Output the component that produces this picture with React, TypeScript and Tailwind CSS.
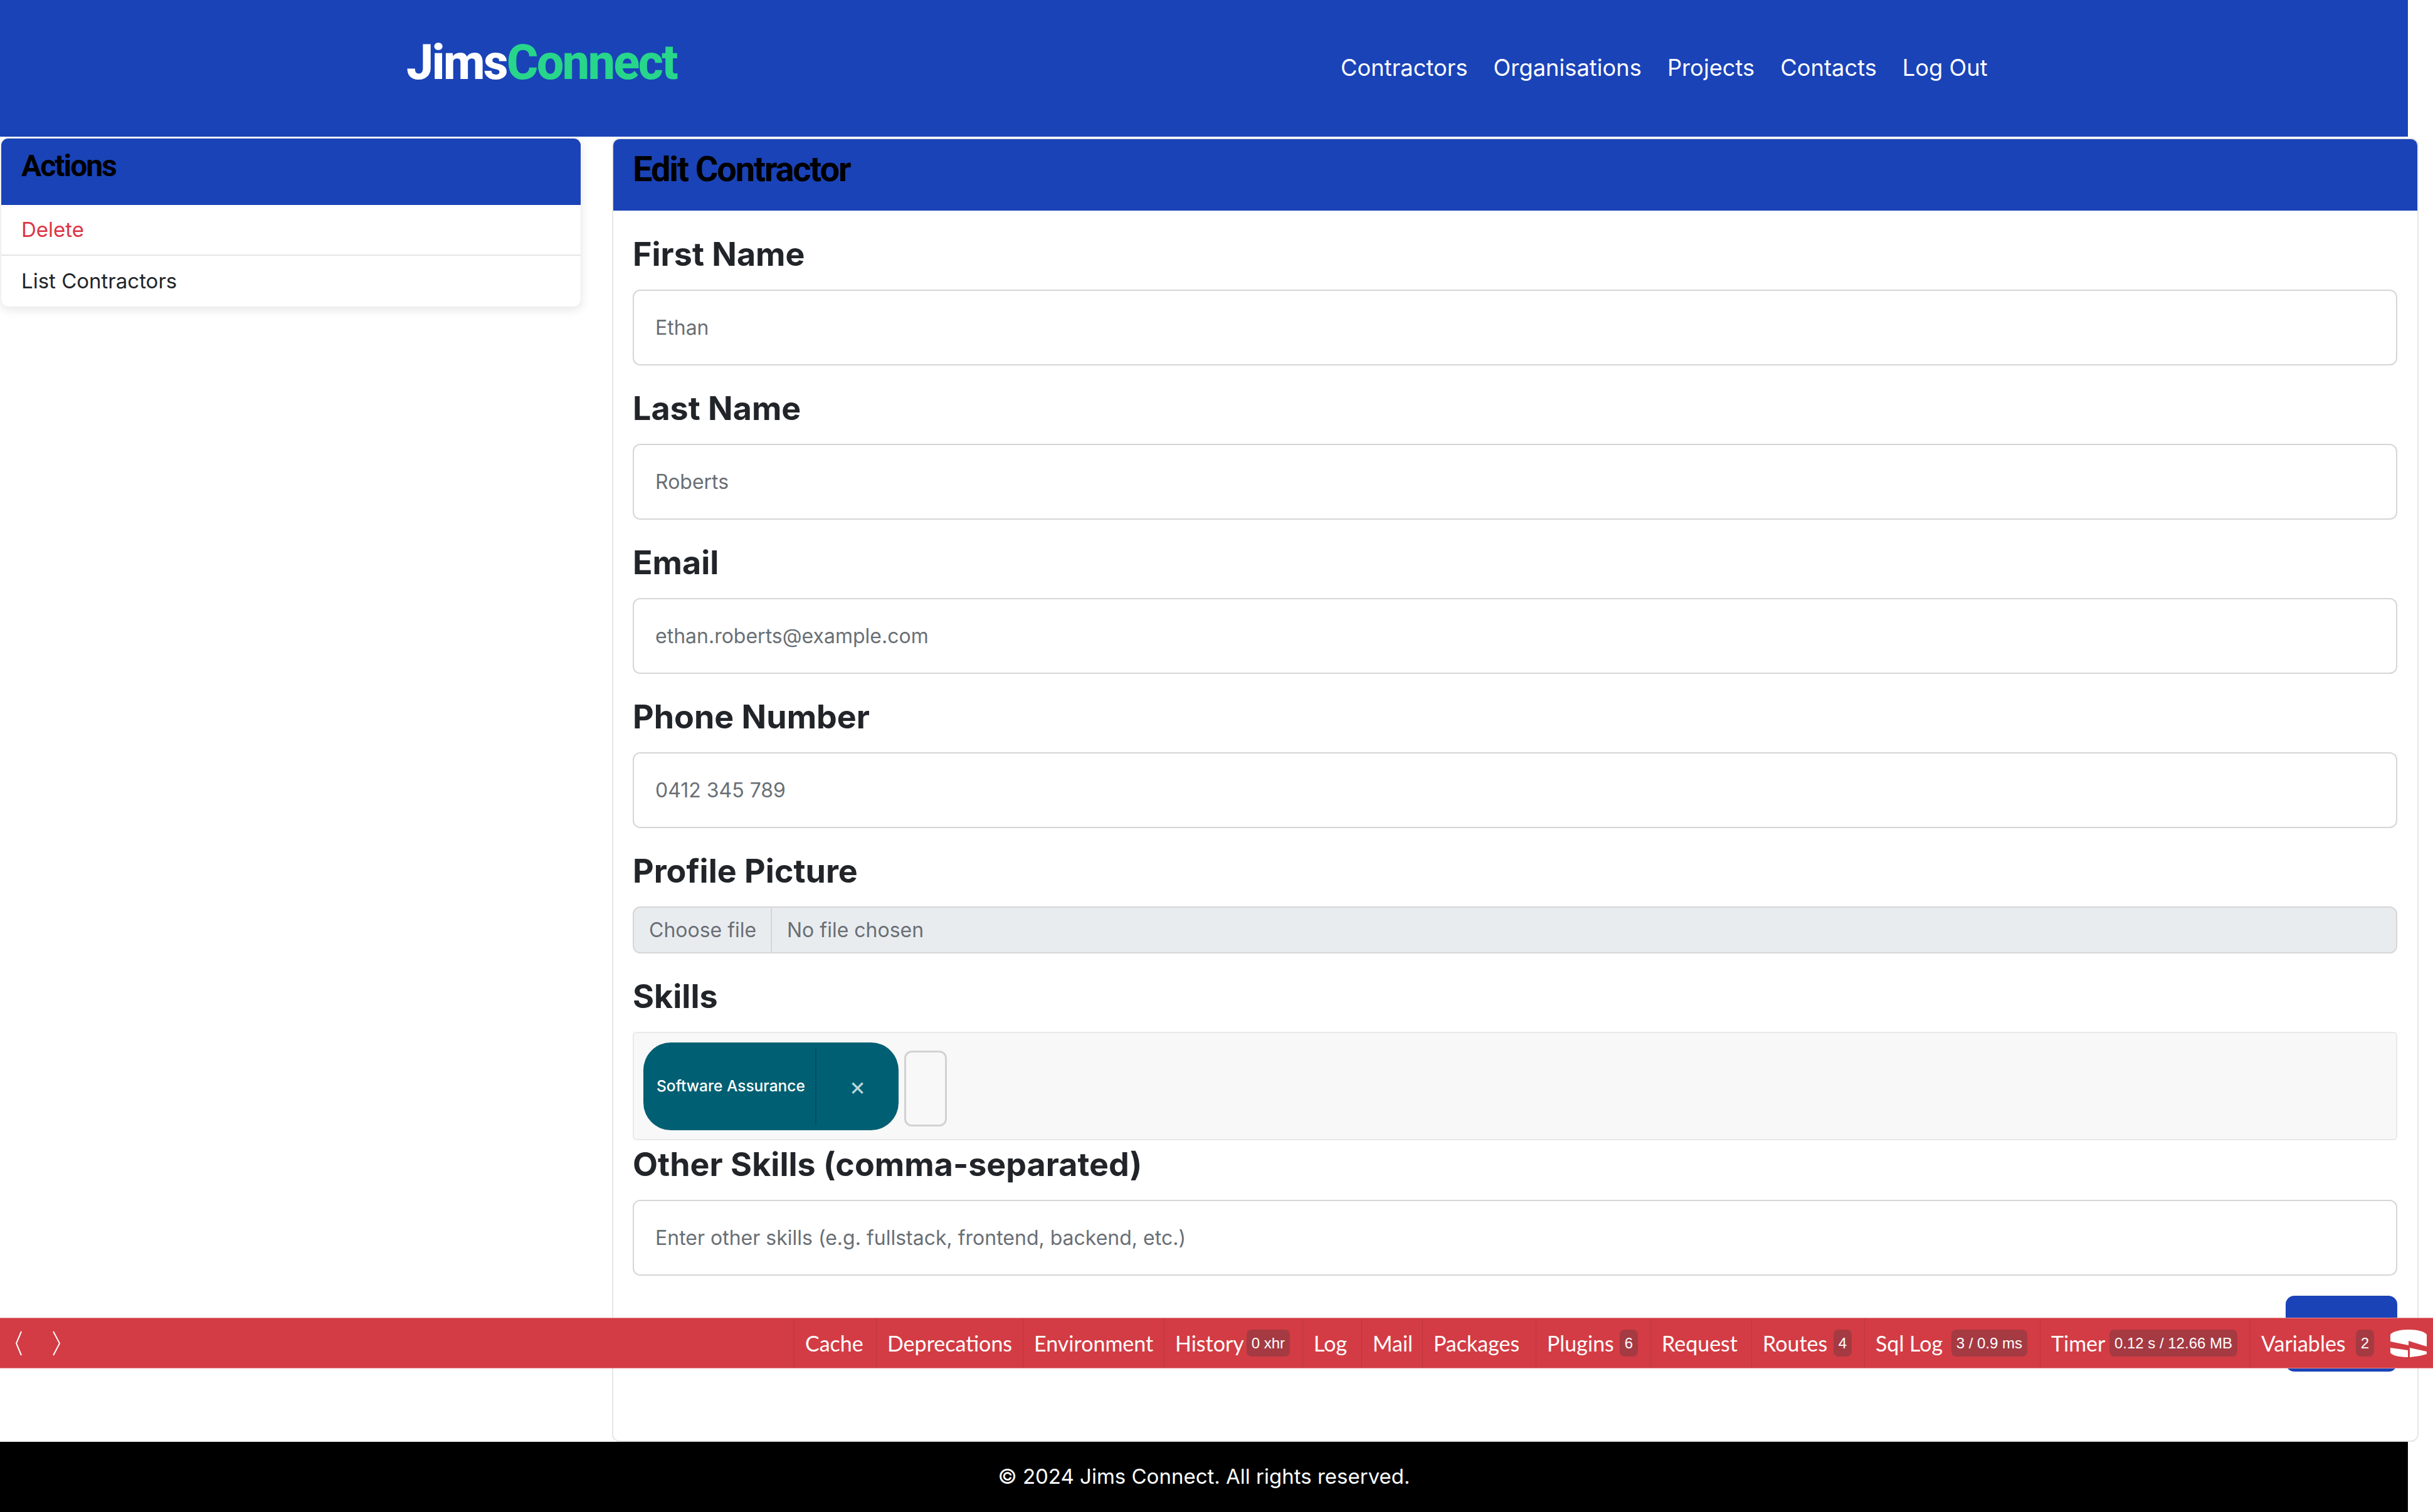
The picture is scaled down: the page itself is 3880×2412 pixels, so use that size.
import React from 'react';

const sans = 'font-["Inter",sans-serif]';
const fieldClass = 'h-[121px] border-2 border-[#d5d6d8] rounded-[12px] bg-white px-[34px] flex items-center text-[32px] text-[#696f75]';
const labelClass = 'text-[52px] leading-[62px] font-bold text-[#212529]';

const Field: React.FC<{ label: string; value: string; className?: string }> = ({ label, value, className }) => (
  <div className={className}>
    <div className={labelClass}>{label}</div>
    <div className={`${fieldClass} mt-[25px]`}>{value}</div>
  </div>
);

const toolbarItems: { label: string; badge?: string; width: string }[] = [
  { label: 'Cache', width: 'w-[131px]' },
  { label: 'Deprecations', width: 'w-[234px]' },
  { label: 'Environment', width: 'w-[225px]' },
  { label: 'History', badge: '0 xhr', width: 'w-[221px]' },
  { label: 'Log', width: 'w-[94px]' },
  { label: 'Mail', width: 'w-[97px]' },
  { label: 'Packages', width: 'w-[181px]' },
  { label: 'Plugins', badge: '6', width: 'w-[183px]' },
  { label: 'Request', width: 'w-[161px]' },
  { label: 'Routes', badge: '4', width: 'w-[180px]' },
  { label: 'Sql Log', badge: '3 / 0.9 ms', width: 'w-[280px]' },
  { label: 'Timer', badge: '0.12 s / 12.66 MB', width: 'w-[335px]' },
  { label: 'Variables', badge: '2', width: 'w-[218px]' },
];

const App: React.FC = () => (
  <div className={`relative w-[3880px] h-[2412px] overflow-hidden bg-white ${sans}`}>
    <div className="w-[3840px]">
      <header className="h-[218px] bg-[#1a43b8] flex items-start">
        <div className="ml-[648px] mt-[54px] font-['Roboto',sans-serif] font-extrabold text-[77px] leading-[92px] tracking-[-2.5px] text-white">
          Jims<span className="text-[#27d68b]">Connect</span>
        </div>
        <nav className="ml-[1059px] mt-[86px] flex gap-[41px] text-[36.3px] leading-[44px] text-white">
          <span>Contractors</span>
          <span>Organisations</span>
          <span>Projects</span>
          <span>Contacts</span>
          <span>Log Out</span>
        </nav>
      </header>
    </div>

    <div className="flex mt-[2px] items-start w-[3858px]">
      <aside className="ml-[1px] w-[926px] rounded-[12px] overflow-hidden bg-white shadow-[0_4px_16px_rgba(0,0,0,0.1)] border border-[#eceded]">
        <div className="h-[106px] bg-[#1a43b8] px-[32px] pt-[15px] font-['Roboto',sans-serif] font-bold text-[48px] leading-[58px] tracking-[-2px] text-black">
          Actions
        </div>
        <div className="h-[81px] px-[32px] flex items-center text-[33px] text-[#dc3545] border-b-2 border-[#e5e5e6]">Delete</div>
        <div className="h-[81px] px-[32px] flex items-center text-[33px] text-[#212529]">List Contractors</div>
      </aside>

      <main className="ml-[49px] w-[2881px] h-[2080px] rounded-[12px] overflow-hidden bg-white border-2 border-[#e6e6e7]">
        <div className="h-[114px] bg-[#1a43b8] px-[31px] pt-[14px] font-['Roboto',sans-serif] font-bold text-[56px] leading-[68px] tracking-[-2.1px] text-black">
          Edit Contractor
        </div>
        <div className="pl-[31px] pr-[32px] pt-[39px]">
          <Field label="First Name" value="Ethan" />
          <Field label="Last Name" value="Roberts" className="mt-[38px]" />
          <Field label="Email" value="ethan.roberts@example.com" className="mt-[38px]" />
          <Field label="Phone Number" value="0412 345 789" className="mt-[38px]" />

          <div className="mt-[38px]">
            <div className={labelClass}>Profile Picture</div>
            <div className="mt-[25px] h-[75px] border-2 border-[#d5d6d8] rounded-[12px] bg-[#e9ecef] flex items-center text-[32px] text-[#696f75]">
              <span className="w-[220px] h-full flex items-center pl-[24px] border-r-2 border-[#d5d6d8]">Choose file</span>
              <span className="pl-[24px]">No file chosen</span>
            </div>
          </div>

          <div className="mt-[38px]">
            <div className={labelClass}>Skills</div>
            <div className="mt-[25px] h-[173px] border-2 border-[#e8e9ea] rounded-[6px] bg-[#f8f8f8] flex items-center pl-[15px] gap-[9px]">
              <div className="w-[407px] h-[140px] rounded-[44px] bg-[#005f73] flex items-center text-white">
                <span className="w-[276px] h-[121px] flex items-center pl-[21px] border-r-2 border-[#004f60] text-[24.5px] font-medium">Software Assurance</span>
                <span className="flex-1 text-center text-[#bcd5da] text-[40px] leading-none">×</span>
              </div>
              <div className="mt-[7px] w-[68px] h-[121px] rounded-[12px] border-[3px] border-[#d2d2d3]" />
            </div>
          </div>

          <Field label="Other Skills (comma-separated)" value="Enter other skills (e.g. fullstack, frontend, backend, etc.)" className="mt-[8px]" />

          <div className="mt-[32px] flex justify-end">
            <div className="w-[178px] h-[121px] rounded-[14px] bg-[#1a43b8]" />
          </div>
        </div>
      </main>
    </div>

    <footer className="absolute left-0 bottom-0 w-[3840px] h-[112px] bg-black flex items-center justify-center text-[33px] text-white">
      © 2024 Jims Connect. All rights reserved.
    </footer>

    {/* debug toolbar */}
    <div className="absolute left-0 right-0 top-[2102px] h-[81px] bg-[#d33c44] border-y border-[#e58a8e] flex items-center text-white font-['Lato',sans-serif] text-[34px]">
      <div className="ml-[24px] flex gap-[47px]">
        <svg className="w-[12px] h-[40px]" viewBox="0 0 12 40" fill="none" stroke="white" strokeWidth="2">
          <path d="M10 1 L2 20 L10 39" />
        </svg>
        <svg className="w-[14px] h-[40px]" viewBox="0 0 14 40" fill="none" stroke="white" strokeWidth="2">
          <path d="M2 1 L12 20 L2 39" />
        </svg>
      </div>
      <div className="ml-auto flex h-full">
        {toolbarItems.map((item) => (
          <div key={item.label} className={`${item.width} flex items-center justify-between pl-[17px] pr-[20px] border-l border-[#c0363e]`}>
            <span>{item.label}</span>
            {item.badge && (
              <span className="h-[43px] px-[8px] rounded-[8px] bg-[#a53a42] flex items-center font-['Liberation_Sans',sans-serif] text-[24px]">
                {item.badge}
              </span>
            )}
          </div>
        ))}
        <div className="w-[74px] pl-[6px] flex items-center">
          <svg className="w-[58px] h-[44px]" viewBox="0 0 58 44" fill="white">
            <path d="M0 8 C3 3 16 0 29 0 C43 0 55 3 58 8 L58 27 L29 18 L29 25 L0 19 Z" />
            <path d="M0 29 L28 33 L28 44 C16 44 4 42 0 37 Z" />
            <path d="M31 29 L58 35 L58 39 C52 41 42 43 31 44 Z" />
          </svg>
        </div>
      </div>
    </div>
  </div>
);

export default App;
